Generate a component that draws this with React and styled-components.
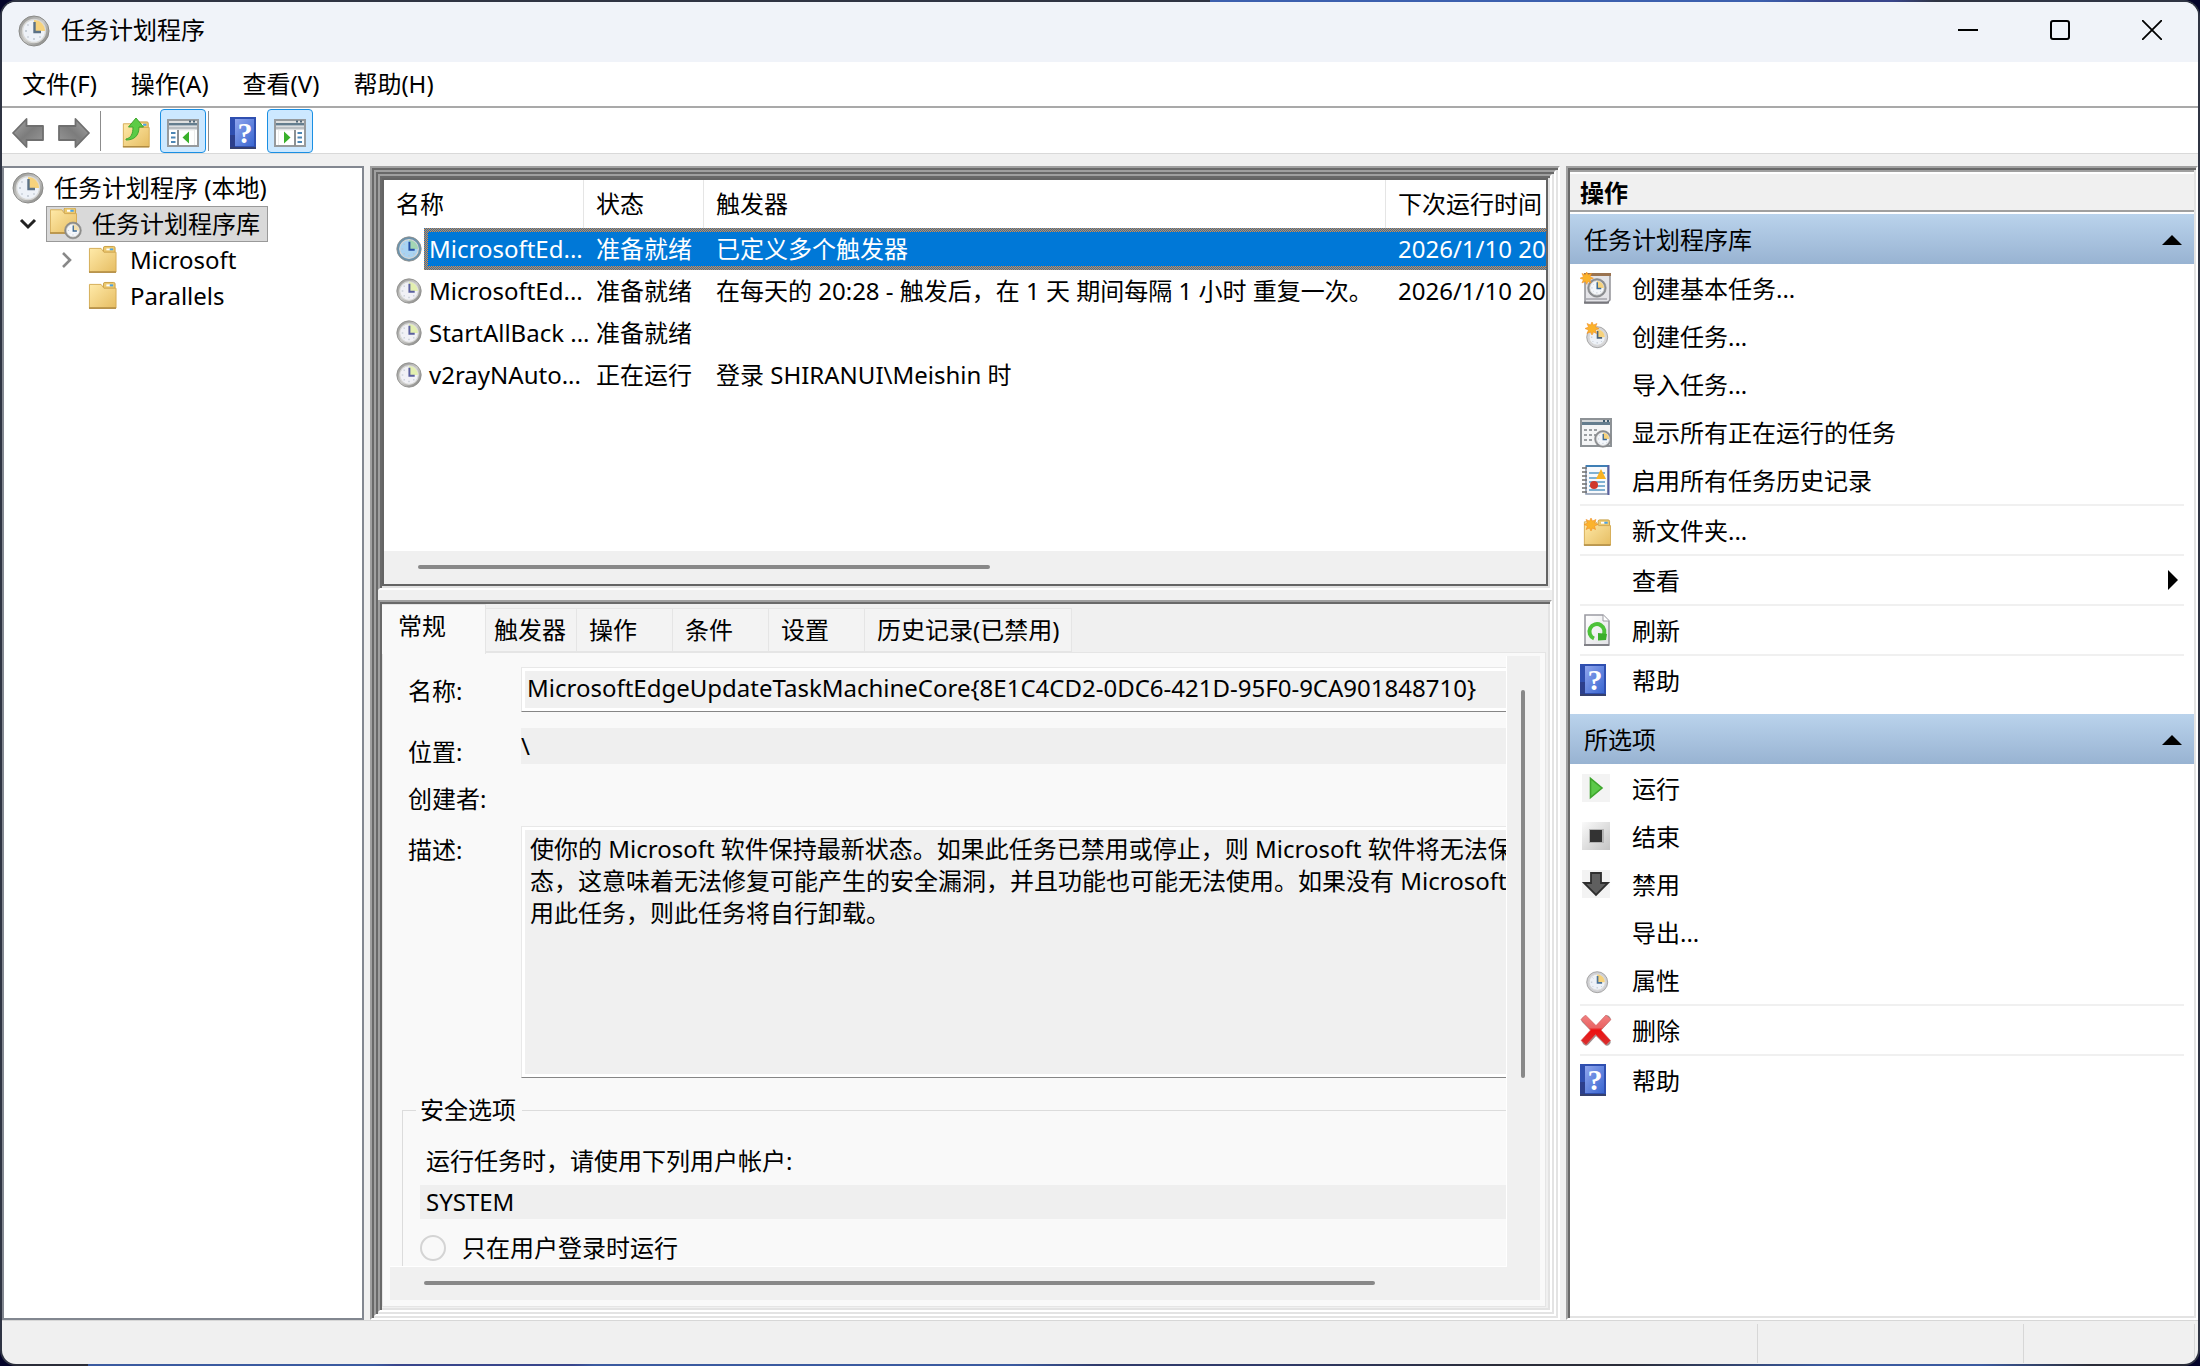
import React from "react";
import styled, { createGlobalStyle, css } from "styled-components";

const face = "#f0f0f0";
const pane = "#f9f9f9";

const GlobalStyle = createGlobalStyle`
  *, *::before, *::after { box-sizing: border-box; }
  body { margin: 0; background: #04042a; }
  body, button, input, textarea, table {
    font-family: "Noto Sans", "Noto Sans CJK SC", sans-serif;
    font-size: 24px;
    line-height: 32px;
    color: #000;
  }
  button { border: 0; padding: 0; background: none; text-align: left; }
  h2, ul { margin: 0; padding: 0; list-style: none; font-size: 24px; }
`;

const Frame = styled.div`
  height: 100vh;
  min-height: 1100px;
  padding: 2px;
  border-radius: 16px;
  background:
    linear-gradient(90deg, #2f3443 0 55%, #3c5fae 55% 80%, #38458c 83% 86%, #2f3443 88%) top / 100% 2px no-repeat,
    linear-gradient(90deg, #2a2c38 0 4%, #3a5aa0 4% 17%, #38458c 18% 26%, #3a5aa0 27% 46%, #2f3a6a 50% 58%, #2a2c38 68% 74%, #3a5aa0 83% 90%, #2a2c38 95%) bottom / 100% 2px no-repeat,
    #2f3443;
`;
const Window = styled.div`
  height: 100%;
  display: flex;
  flex-direction: column;
  border-radius: 14px;
  overflow: hidden;
  background: ${face};
`;

const TitleBar = styled.header`
  height: 60px;
  flex: none;
  display: flex;
  align-items: center;
  gap: 11px;
  padding: 0 0 2px 16px;
  background: #f0f3f9;
`;
const Title = styled.div`
  flex: 1;
  padding-bottom: 2px;
`;
const CaptionButtons = styled.div`
  display: flex;
  align-self: flex-start;
`;
const CaptionButton = styled.button`
  width: 92px;
  height: 56px;
  display: grid;
  place-items: center;
`;

const MenuBar = styled.nav`
  height: 46px;
  flex: none;
  display: flex;
  align-items: center;
  gap: 34px;
  padding-left: 20px;
  background: #fff;
  border-bottom: 2px solid #a9a9a9;
`;

const ToolBar = styled.div`
  height: 46px;
  flex: none;
  display: flex;
  align-items: flex-end;
  padding-left: 3px;
  background: #fff;
  border-bottom: 1px solid #d9d9d9;
`;
const ToolButton = styled.button`
  width: 46px;
  height: 44px;
  padding-top: 4px;
  display: grid;
  place-items: center;
  ${(p) => p.$on && css`
    margin-left: 1px;
    background: #cce8ff;
    border: 1px solid #1a8fe3;
    border-radius: 4px;
  `}
`;
const ToolDivider = styled.span`
  width: 1px;
  height: 40px;
  margin: 0 ${(p) => p.$after}px 2px ${(p) => p.$before}px;
  background: #8c8c8c;
`;

const Main = styled.main`
  flex: 1;
  min-height: 0;
  display: grid;
  grid-template-columns: 362px minmax(0, 1fr) 632px;
  gap: 6px;
  padding-top: 12px;
`;

const sunken = css`
  border: 2px solid;
  border-color: #a0a0a0 #fff #fff #a0a0a0;
  padding: 2px;
  box-shadow: inset 2px 2px 0 #696969, inset -2px -2px 0 #e3e3e3;
`;

/* tree */
const TreePane = styled.aside`
  background: #fff;
  border: 2px solid #828790;
  padding-top: 2px;
`;
const TreeRow = styled.div`
  height: 36px;
  display: flex;
  align-items: center;
  padding-left: ${(p) => p.$indent}px;
`;
const Expander = styled.span`
  width: 28px;
  margin-right: 4px;
  display: grid;
  place-items: center;
`;
const TreeLabel = styled.button`
  height: 36px;
  display: flex;
  align-items: center;
  gap: ${(p) => p.$gap}px;
  padding: 0 7px 0 3px;
  border: 1px solid ${(p) => (p.$selected ? "#999" : "transparent")};
  background: ${(p) => (p.$selected ? "#d9d9d9" : "none")};
`;

/* centre */
const Outer = styled.section`
  ${sunken}
  min-height: 0;
`;
const Inner = styled.div`
  ${sunken}
  height: 100%;
  display: flex;
  flex-direction: column;
  gap: 10px;
`;
const ListFrame = styled.div`
  ${sunken}
  flex: 408 1 0;
  min-height: 0;
`;
const ListView = styled.div`
  height: 100%;
  border: 2px solid #646464;
  background: #fff;
  display: flex;
  flex-direction: column;
  overflow: hidden;
`;
const ListScroll = styled.div`
  flex: 1;
  overflow: hidden;
`;
const HScroll = styled.div`
  height: 33px;
  flex: none;
  padding: 14px 34px 0;
  background: ${face};
`;
const Thumb = styled.div`
  width: ${(p) => p.$w};
  height: ${(p) => p.$h};
  border-radius: 2px;
  background: #888;
`;
const Table = styled.table`
  width: 1240px;
  table-layout: fixed;
  border-collapse: separate;
  border-spacing: 0;
`;
const Th = styled.th`
  height: 48px;
  padding: 0 0 0 12px;
  text-align: left;
  font-weight: 400;
  border-right: 1px solid #e5e5e5;
`;
const focusRect = css`
  color: #fff;
  border: 0 solid transparent;
  border-width: 4px 0;
  background:
    linear-gradient(#0078d7, #0078d7) padding-box,
    repeating-conic-gradient(#ff8728 0 25%, #0078d7 0 50%) 0 0 / 2px 2px border-box;
`;
const Td = styled.td`
  height: 42px;
  padding: 0 0 0 12px;
  line-height: 34px;
  white-space: nowrap;
  ${(p) => p.$selected && focusRect}
`;
const NameCell = styled.div`
  height: 42px;
  display: flex;
  align-items: center;
  gap: 2px;
`;
const NameText = styled.span`
  flex: 1;
  min-width: 0;
  height: 42px;
  padding: ${(p) => (p.$selected ? "0 0 0 1px" : "4px 0 4px 5px")};
  ${(p) => p.$selected && css`
    ${focusRect}
    border-left-width: 4px;
  `}
`;

/* details */
const Details = styled.div`
  ${sunken}
  flex: 704 1 0;
  min-height: 0;
  display: flex;
  flex-direction: column;
`;
const Tabs = styled.div`
  height: 48px;
  flex: none;
  display: flex;
  align-items: flex-end;
`;
const Tab = styled.button`
  height: 44px;
  min-width: 96px;
  padding: 0 12px;
  border: 1px solid #e5e5e5;
  border-left-width: 0;
  background: #f3f3f3;
  ${(p) => p.$narrow && css`
    min-width: 91px;
    padding: 0 8px;
  `}
  ${(p) => p.$active && css`
    height: 50px;
    min-width: 104px;
    padding: 0 16px 8px;
    margin-bottom: -2px;
    border-bottom: 0;
    background: ${pane};
    z-index: 1;
  `}
`;
const TabBody = styled.div`
  flex: 1;
  min-height: 0;
  margin-right: 2px;
  margin-bottom: 1px;
  padding: 3px 5px 6px 7px;
  border: 1px solid #e5e5e5;
  background: ${pane};
  display: grid;
  grid-template-columns: minmax(0, 1fr) 33px;
  grid-template-rows: minmax(0, 1fr) 33px;
`;
const FormView = styled.div`
  overflow: hidden;
  border: 0 solid #fff;
  border-width: 0 1px 1px 0;
`;
const Form = styled.form`
  width: 1300px;
  padding: 11px 0 0 12px;
`;
const Field = styled.div`
  display: grid;
  grid-template-columns: 113px 1fr;
  align-items: start;
  padding-left: 6px;
  margin-bottom: ${(p) => p.$gap}px;
`;
const Label = styled.label`
  padding-top: 8px;
`;
const boxed = css`
  width: 100%;
  display: block;
  border: 1px solid #e8e8e8;
  border-bottom-color: #868686;
  border-radius: 0;
  outline: 0;
  background: ${face};
  box-shadow: inset 0 0 0 3px #fff;
`;
const NameInput = styled.input`
  ${boxed}
  height: 45px;
  padding: 0 5px 4px;
`;
const PlainInput = styled.input`
  width: 100%;
  height: ${(p) => p.$h}px;
  padding: 0 ${(p) => p.$pad}px 2px;
  border: 0;
  outline: 0;
  background: #efefef;
`;
const Description = styled.textarea`
  ${boxed}
  height: 252px;
  padding: 6px 8px;
  resize: none;
  overflow: hidden;
  white-space: pre;
`;
const Group = styled.fieldset`
  margin: 0;
  padding: 19px 0 0 17px;
  border: 1px solid #dcdcdc;
  height: 300px;
`;
const Legend = styled.legend`
  padding: 0 6px 0 4px;
  margin-left: -4px;
`;
const Caption = styled.label`
  display: block;
  padding-left: 6px;
  margin-bottom: 8px;
`;
const RadioRow = styled.label`
  display: flex;
  align-items: center;
  gap: 16px;
  margin-top: 13px;
`;
const Radio = styled.input`
  appearance: none;
  width: 26px;
  height: 26px;
  margin: 0;
  border: 2px solid #d4d4d4;
  border-radius: 50%;
`;
const VScroll = styled.div`
  padding: 34px 14px;
  background: ${face};
`;
const WideScroll = styled(HScroll)`
  grid-column: 1 / 3;
`;

/* actions */
const ActionsPane = styled.aside`
  ${sunken}
  background: #fff;
`;
const ActionsTitle = styled.h2`
  height: 42px;
  margin-bottom: 2px;
  padding: 5px 0 0 10px;
  border: 0 solid #a0a0a0;
  border-width: 2px 0;
  background: ${face};
  box-shadow: inset 0 2px 0 #fff;
`;
const SectionTitle = styled.button`
  width: 100%;
  height: 50px;
  display: flex;
  align-items: center;
  justify-content: space-between;
  padding: 2px 12px 0 14px;
  background: linear-gradient(#bad3ec, #98b3d2);
`;
const ActionList = styled.ul`
  padding: 0 10px 10px;
`;
const ActionItem = styled.li`
  border-bottom: ${(p) => (p.$line ? 2 : 0)}px solid #f0f0f0;
`;
const ActionButton = styled.button`
  width: 100%;
  height: 48px;
  display: grid;
  grid-template-columns: 32px 1fr auto;
  align-items: center;
  gap: 20px;
  padding-right: 6px;
`;
const ActionText = styled.span`
  padding-top: 2px;
`;

/* status */
const StatusBar = styled.footer`
  height: 44px;
  flex: none;
  display: flex;
  justify-content: flex-end;
  padding: 3px 3px 1px 0;
  border-top: 1px solid #d7d7d7;
`;
const StatusCell = styled.div`
  width: ${(p) => p.$w}px;
  border-left: 1px solid #d7d7d7;
  &:last-child { border-right: 1px solid #d7d7d7; }
`;

/* icons */
const DefsSvg = styled.svg`
  position: absolute;
`;
const Defs = () => (
  <DefsSvg width="0" height="0" aria-hidden="true">
    <defs>
      <linearGradient id="rim" x1="0" y1="0" x2="1" y2="1">
        <stop offset="0" stopColor="#8d8d8b" /><stop offset=".5" stopColor="#c9c9c7" /><stop offset="1" stopColor="#7b7b79" />
      </linearGradient>
      <linearGradient id="folder" x1="0" y1="0" x2="1" y2="1">
        <stop offset="0" stopColor="#ffeaa9" /><stop offset="1" stopColor="#e6bd62" />
      </linearGradient>
      <linearGradient id="arrow" x1="0" y1="0" x2="1" y2="1">
        <stop offset="0" stopColor="#a8a8a8" /><stop offset=".5" stopColor="#7c7c7c" /><stop offset="1" stopColor="#9a9a9a" />
      </linearGradient>
      <linearGradient id="book" x1="0" y1="0" x2="1" y2="1">
        <stop offset="0" stopColor="#8fa6ee" /><stop offset="1" stopColor="#3a66d0" />
      </linearGradient>
      <linearGradient id="stopbg" x1="0" y1="0" x2="1" y2="1">
        <stop offset="0" stopColor="#fafafa" /><stop offset="1" stopColor="#c4c4c4" />
      </linearGradient>
      <linearGradient id="red" x1="0" y1="0" x2="0" y2="1">
        <stop offset="0" stopColor="#f08080" /><stop offset=".42" stopColor="#ea6464" /><stop offset=".5" stopColor="#ee1010" /><stop offset="1" stopColor="#d83030" />
      </linearGradient>
      <linearGradient id="page" x1="0" y1="0" x2="1" y2="1">
        <stop offset="0" stopColor="#fff" /><stop offset="1" stopColor="#e2e2e6" />
      </linearGradient>
    </defs>
  </DefsSvg>
);
const ClockShape = ({ rim = "url(#rim)", fill = "#eef2f8", wedge = "#f6d27c", hand = "#5b7186" }) => (
  <g>
    <circle cx="16" cy="16" r="15" fill={rim} stroke="#8a8a88" strokeWidth="1" />
    <circle cx="16" cy="16" r="11.5" fill={fill} stroke="#d8d8d6" strokeWidth="1.4" />
    <path d="M16 16V5a11 11 0 0 1 11 11z" fill={wedge} />
    <path d="M16.5 7v10H23" fill="none" stroke={hand} strokeWidth="2.4" />
    <path d="M7 16h2M16 25v-2M9.5 9.5l1 1M9.5 22.5l1-1M22.5 22.5l-1-1" stroke="#b9c2cc" strokeWidth="1.4" />
  </g>
);
const Svg = ({ s = 32, children }) => (
  <svg width={s} height={s} viewBox="0 0 32 32" aria-hidden="true">{children}</svg>
);
const Clock = ({ s = 32, ...p }) => <Svg s={s}><ClockShape {...p} /></Svg>;
const FolderShape = () => (
  <g>
    <path d="M17 8V3.5a1.5 1.5 0 0 1 1.5-1.5h9A1.5 1.5 0 0 1 29 3.5V8z" fill="#ecc96f" stroke="#c79f45" />
    <path d="M20 4h4v2h-4z" fill="#fff" /><path d="M23.5 4H27v2h-3.5z" fill="#4aa3e8" />
    <path d="M2.5 4h12l3 4H30v20.5H2.5z" fill="url(#folder)" stroke="#d5ac55" />
    <path d="M2 28.5h28" stroke="#b08b42" strokeWidth="1.6" />
  </g>
);
const Folder = () => <svg width="29" height="30" viewBox="1 1 30 30" aria-hidden="true"><FolderShape /></svg>;
const FolderClock = () => (
  <Svg>
    <g transform="translate(-2 -2) scale(.95)"><FolderShape /></g>
    <g transform="translate(14 13.5) scale(.56)"><ClockShape rim="#8d8d8b" fill="#f4f7fb" wedge="#f3dfae" hand="#3d6a94" /></g>
  </Svg>
);
const Star = ({ x = 0, y = 0, k = 1 }) => (
  <path
    transform={`translate(${x} ${y}) scale(${k})`}
    d="M6 0l1.5 3L11 1.5 9.5 5 13 6.5 9.5 8l1 3.5L7.5 10 6 13 4.5 10 1 11.5 2.5 8-1 6.5 2.5 5 1 1.5 4.5 3z"
    fill="#fbb32c" stroke="#f08f25" strokeWidth=".6"
  />
);
const WindowShape = () => (
  <g>
    <path d="M1 3h30v27H1z" fill="#f4f5f6" stroke="#8d9296" strokeWidth="2" />
    <path d="M2 4h28v2H2z" fill="#d3d6d8" /><path d="M2 6h28v3H2z" fill="#647d8e" />
    <path d="M23 4h2v2h-2zM27 4h2v2h-2z" fill="#3d5a6e" />
  </g>
);
const PaneIcon = ({ right }) => (
  <svg width="32" height="28" viewBox="0 0 32 28" aria-hidden="true">
    <path d="M1 1h30v26H1z" fill="#fff" stroke="#969a9d" strokeWidth="2" />
    <path d="M2 2h28v2H2z" fill="#dedfdf" /><path d="M2 4h28v2.5H2z" fill="#647d8e" />
    <path d="M22 1.5h2v2h-2zM26 1.5h2v2h-2z" fill="#51687a" />
    <path d="M2 7.5h28v3H2z" fill="#b9bec2" />
    <g transform={right ? "translate(32 0) scale(-1 1)" : undefined}>
      <path d="M11 11v16" stroke="#8b9093" strokeWidth="2" />
      <path d="M4 14h4.5M4 18.5h4.5M4 23h4.5" stroke="#4c86b4" strokeWidth="1.8" />
      <path d="M15.5 18.500l6.500-6v12z" fill="#38b02a" />
      <path d="M12.5 11h15v15" fill="none" stroke="#ececec" />
    </g>
  </svg>
);
const Help = () => (
  <svg width="26" height="32" viewBox="0 0 26 32" aria-hidden="true">
    <path d="M0 0h26v32H0z" fill="#2f4fb0" /><path d="M5 2h19v27H5z" fill="url(#book)" />
    <path d="M0 18h5v12H0z" fill="#2c3f8c" /><path d="M0 30h26v2H0z" fill="#35406e" />
    <text x="15" y="26" textAnchor="middle" fontFamily="Liberation Serif, serif" fontWeight="700" fontSize="30" fill="#fff">?</text>
  </svg>
);
const Back = ({ flip }) => (
  <Svg>
    <path
      transform={flip ? "translate(32 0) scale(-1 1)" : undefined}
      d="M1 16L14.5 2v7H31v14H14.5v7z" fill="url(#arrow)" stroke="#6f6f6f" strokeWidth="1.8" strokeLinejoin="round"
    />
  </Svg>
);
const FolderUp = () => (
  <Svg>
    <g transform="translate(1 3) scale(.94)"><FolderShape /></g>
    <path d="M6 22c5-1 7-5 7-12H8.5L16 1l7.5 9H19c0 9-5 13-13 13z" fill="#5ccb45" stroke="#3fa52e" />
  </Svg>
);
const CreateBasic = () => (
  <Svg>
    <path d="M5 2h25v26l-3 3H5z" fill="#e4e4e8" stroke="#8a8a90" strokeWidth="1.4" />
    <path d="M4 1h27v3H4z" fill="#9a7350" /><path d="M6 27h21" stroke="#b4b4ba" strokeWidth="2" /><path d="M4 30.5h25" stroke="#77777c" strokeWidth="2" />
    <g transform="translate(7 6) scale(.62)"><ClockShape rim="#8a8d92" fill="#f4f7fb" hand="#3d6a94" /></g>
    <Star k={0.95} x={1} />
  </Svg>
);
const CreateTask = () => (
  <Svg>
    <g transform="translate(6 6) scale(.7)"><ClockShape rim="#d5d5d8" hand="#4b6378" /></g>
    <Star x={6} y={2} />
  </Svg>
);
const ShowRunning = () => (
  <Svg>
    <WindowShape />
    <path d="M4 14h14M4 19h12M4 24h10" stroke="#9b9fa2" strokeWidth="2" strokeDasharray="3 2" />
    <g transform="translate(14 14) scale(.56)"><ClockShape rim="#8a8d92" fill="#f4f7fb" hand="#3d6a94" /></g>
  </Svg>
);
const History = () => (
  <Svg>
    <path d="M6 2h22v28H6z" fill="#f7f9fc" stroke="#8a98ae" strokeWidth="1.6" />
    <path d="M6 2h23" stroke="#3f7fb5" strokeWidth="2" /><path d="M28.5 1v30" stroke="#5a61a0" strokeWidth="2" />
    <path d="M9 9h16M9 14h16M9 18h16M9 22h16M9 26h16" stroke="#7fb0d2" strokeWidth="1.8" />
    <path d="M2 4h5M2 8h5M2 12h5M2 16h5M2 20h5M2 24h5M2 28h5" stroke="#6f6f6f" strokeWidth="1.6" />
    <path d="M21 5l5 10H16z" fill="#f9b223" /><circle cx="14" cy="21" r="4" fill="#d0382c" />
  </Svg>
);
const NewFolder = () => (
  <Svg>
    <g transform="translate(2 4) scale(.95)"><FolderShape /></g>
    <Star x={5} y={4} />
  </Svg>
);
const Refresh = () => (
  <Svg>
    <path d="M5 1h18l6 6v24H5z" fill="url(#page)" stroke="#9b9ba2" strokeWidth="1.6" />
    <path d="M23 1v6h6" fill="#fff" stroke="#9b9ba2" /><path d="M4 31h25" stroke="#808086" strokeWidth="2" />
    <path d="M14 24.5A7.5 7.5 0 1 1 23 22" fill="none" stroke="#4dc23a" strokeWidth="4" />
    <path d="M18 19l9 1-1 6-8 .5z" fill="#3bae2b" />
  </Svg>
);
const Run = () => (
  <Svg><path d="M2 2h28v28H2z" fill="#f3f3f3" /><path d="M10.5 6.500v19L22 16z" fill="#5cc94a" stroke="#3da52c" strokeWidth="1.6" /></Svg>
);
const End = () => (
  <Svg><path d="M2 2h28v28H2z" fill="url(#stopbg)" /><path d="M9 9h15v14H9z" fill="#b5b5b5" /><path d="M10 10h12v12H10z" fill="#333" /></Svg>
);
const Disable = () => (
  <Svg><path d="M2 2h28v28H2z" fill="#f3f3f3" /><path d="M11 5h10v10h7L16 27 4 15h7z" fill="#5f5f5f" stroke="#2e2e2e" strokeWidth="1.8" /></Svg>
);
const Properties = () => (
  <Svg><g transform="translate(6 7) scale(.7)"><ClockShape rim="#cfcfd3" hand="#4b7296" /></g></Svg>
);
const Delete = () => (
  <Svg>
    <path d="M5 6l22 22M27 5L6 28" stroke="#9c8f8f" strokeWidth="7" strokeLinecap="round" />
    <path d="M5.5 1L16 11.500 26 1l5 4.500L21 16l9.500 10.500L26 31 15.500 20.500 6 31 1 26.500 10.500 16 1 5.500z" fill="url(#red)" stroke="#d96a6a" strokeWidth=".6" />
  </Svg>
);

const tasks = [
  ["MicrosoftEd...", "准备就绪", "已定义多个触发器", "2026/1/10 20:28:10"],
  ["MicrosoftEd...", "准备就绪", "在每天的 20:28 - 触发后，在 1 天 期间每隔 1 小时 重复一次。", "2026/1/10 20:28:10"],
  ["StartAllBack ...", "准备就绪", "", ""],
  ["v2rayNAuto...", "正在运行", "登录 SHIRANUI\\Meishin 时", ""],
];

const sections = [
  {
    title: "任务计划程序库",
    items: [
      ["创建基本任务...", CreateBasic],
      ["创建任务...", CreateTask],
      ["导入任务...", null],
      ["显示所有正在运行的任务", ShowRunning],
      ["启用所有任务历史记录", History, true],
      ["新文件夹...", NewFolder, true],
      ["查看", null, true, true],
      ["刷新", Refresh, true],
      ["帮助", Help],
    ],
  },
  {
    title: "所选项",
    items: [
      ["运行", Run],
      ["结束", End],
      ["禁用", Disable],
      ["导出...", null],
      ["属性", Properties, true],
      ["删除", Delete, true],
      ["帮助", Help],
    ],
  },
];

const description =
  "使你的 Microsoft 软件保持最新状态。如果此任务已禁用或停止，则 Microsoft 软件将无法保持最新状\n" +
  "态，这意味着无法修复可能产生的安全漏洞，并且功能也可能无法使用。如果没有 Microsoft 软件使\n" +
  "用此任务，则此任务将自行卸载。";

export default function App() {
  return (
    <Frame lang="zh-CN">
      <GlobalStyle />
      <Defs />
      <Window>
        <TitleBar>
          <Clock />
          <Title>任务计划程序</Title>
          <CaptionButtons>
            <CaptionButton aria-label="最小化">
              <svg width="20" height="20"><path d="M0 10h20" stroke="#000" strokeWidth="2" /></svg>
            </CaptionButton>
            <CaptionButton aria-label="最大化">
              <svg width="20" height="20"><rect x="1" y="1" width="18" height="18" rx="2" fill="none" stroke="#000" strokeWidth="2" /></svg>
            </CaptionButton>
            <CaptionButton aria-label="关闭">
              <svg width="20" height="20"><path d="M0 0l20 20M20 0L0 20" stroke="#000" strokeWidth="1.8" /></svg>
            </CaptionButton>
          </CaptionButtons>
        </TitleBar>

        <MenuBar>
          {["文件(F)", "操作(A)", "查看(V)", "帮助(H)"].map((m) => <button key={m}>{m}</button>)}
        </MenuBar>

        <ToolBar>
          <ToolButton aria-label="后退"><Back /></ToolButton>
          <ToolButton aria-label="前进"><Back flip /></ToolButton>
          <ToolDivider $before={3} $after={12} />
          <ToolButton aria-label="上一级"><FolderUp /></ToolButton>
          <ToolButton $on aria-label="控制台树"><PaneIcon /></ToolButton>
          <ToolDivider $before={2} $after={11} />
          <ToolButton aria-label="帮助"><Help /></ToolButton>
          <ToolButton $on aria-label="操作窗格"><PaneIcon right /></ToolButton>
        </ToolBar>

        <Main>
          <TreePane>
            <TreeRow $indent={4}>
              <TreeLabel $gap={10}><Clock />任务计划程序 (本地)</TreeLabel>
            </TreeRow>
            <TreeRow $indent={10}>
              <Expander>
                <svg width="18" height="12"><path d="M2 2l7 7 7-7" fill="none" stroke="#222" strokeWidth="3" /></svg>
              </Expander>
              <TreeLabel $selected $gap={10}><FolderClock />任务计划程序库</TreeLabel>
            </TreeRow>
            <TreeRow $indent={48}>
              <Expander>
                <svg width="11" height="18"><path d="M2 2l7 7-7 7" fill="none" stroke="#888" strokeWidth="2.6" /></svg>
              </Expander>
              <TreeLabel $gap={13}><Folder />Microsoft</TreeLabel>
            </TreeRow>
            <TreeRow $indent={80}>
              <TreeLabel $gap={13}><Folder />Parallels</TreeLabel>
            </TreeRow>
          </TreePane>

          <Outer>
            <Inner>
              <ListFrame>
                <ListView>
                  <ListScroll>
                    <Table>
                      <colgroup>
                        <col width="200" /><col width="120" /><col width="682" /><col />
                      </colgroup>
                      <thead>
                        <tr><Th>名称</Th><Th>状态</Th><Th>触发器</Th><Th>下次运行时间</Th></tr>
                      </thead>
                      <tbody>
                        {tasks.map(([name, status, trigger, next], i) => (
                          <tr key={i}>
                            <Td>
                              <NameCell>
                                {i === 0
                                  ? <Clock s={26} rim="#6b93ad" fill="#a9d3f2" wedge="#a3d6b4" hand="#2450a8" />
                                  : <Clock s={26} fill="#f1f1f6" wedge="#e3efb0" hand="#5a5f9e" />}
                                <NameText $selected={i === 0}>{name}</NameText>
                              </NameCell>
                            </Td>
                            <Td $selected={i === 0}>{status}</Td>
                            <Td $selected={i === 0}>{trigger}</Td>
                            <Td $selected={i === 0}>{next}</Td>
                          </tr>
                        ))}
                      </tbody>
                    </Table>
                  </ListScroll>
                  <HScroll><Thumb $w="572px" $h="4px" /></HScroll>
                </ListView>
              </ListFrame>

              <Details>
                <Tabs role="tablist">
                  <Tab $active role="tab">常规</Tab>
                  <Tab $narrow role="tab">触发器</Tab>
                  <Tab role="tab">操作</Tab>
                  <Tab role="tab">条件</Tab>
                  <Tab role="tab">设置</Tab>
                  <Tab role="tab">历史记录(已禁用)</Tab>
                </Tabs>
                <TabBody>
                  <FormView>
                    <Form>
                      <Field $gap={16}>
                        <Label htmlFor="name">名称:</Label>
                        <NameInput id="name" readOnly value="MicrosoftEdgeUpdateTaskMachineCore{8E1C4CD2-0DC6-421D-95F0-9CA901848710}" />
                      </Field>
                      <Field $gap={7}>
                        <Label htmlFor="location">位置:</Label>
                        <PlainInput id="location" $h={36} $pad={0} readOnly value="\" />
                      </Field>
                      <Field $gap={11}>
                        <Label as="span">创建者:</Label>
                      </Field>
                      <Field $gap={16}>
                        <Label htmlFor="description">描述:</Label>
                        <Description id="description" readOnly value={description} />
                      </Field>
                      <Group>
                        <Legend>安全选项</Legend>
                        <Caption htmlFor="account">运行任务时，请使用下列用户帐户:</Caption>
                        <PlainInput id="account" $h={34} $pad={6} readOnly value="SYSTEM" />
                        <RadioRow><Radio type="radio" name="logon" />只在用户登录时运行</RadioRow>
                      </Group>
                    </Form>
                  </FormView>
                  <VScroll><Thumb $w="4px" $h="388px" /></VScroll>
                  <WideScroll><Thumb $w="951px" $h="4px" /></WideScroll>
                </TabBody>
              </Details>
            </Inner>
          </Outer>

          <ActionsPane>
            <ActionsTitle>操作</ActionsTitle>
            {sections.map((s) => (
              <section key={s.title}>
                <SectionTitle>
                  {s.title}
                  <svg width="20" height="10"><path d="M10 0l10 10H0z" /></svg>
                </SectionTitle>
                <ActionList>
                  {s.items.map(([text, Icon, line, sub]) => (
                    <ActionItem key={text} $line={line}>
                      <ActionButton>
                        {Icon ? <Icon /> : <span />}
                        <ActionText>{text}</ActionText>
                        {sub && <svg width="10" height="20"><path d="M0 0l10 10L0 20z" /></svg>}
                      </ActionButton>
                    </ActionItem>
                  ))}
                </ActionList>
              </section>
            ))}
          </ActionsPane>
        </Main>

        <StatusBar>
          <StatusCell $w={266} />
          <StatusCell $w={172} />
        </StatusBar>
      </Window>
    </Frame>
  );
}
